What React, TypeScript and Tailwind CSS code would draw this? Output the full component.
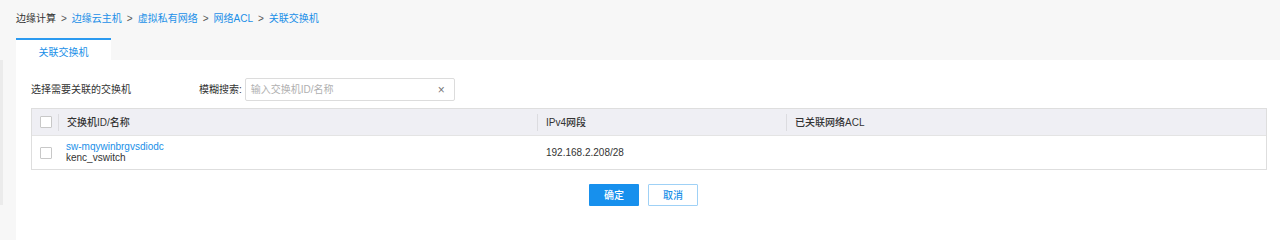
const crumbs = ["边缘云主机", "虚拟私有网络", "网络ACL", "关联交换机"];

const Checkbox = () => (
    <span className="block w-[12px] h-[12px] border border-[#c8c8c8] bg-white rounded-[1px]" />
);

const App = () => {
    return (
        <div
            className="w-[1280px] h-[240px] bg-[#f7f7f7] overflow-hidden flex text-[10px] text-[#333]"
            style={{ fontFamily: '"Liberation Sans", "Noto Sans CJK SC", sans-serif' }}
        >
            {/* left scroll strip */}
            <div className="w-[3px] shrink-0 pt-[60px]">
                <div className="h-[145px] bg-[#ebebeb]" />
            </div>

            <div className="flex-1 flex flex-col pl-[13px]">
                {/* breadcrumb */}
                <div className="h-[38px] flex items-center pb-[1px] gap-[4px] leading-none">
                    <span>边缘计算</span>
                    {crumbs.map((c) => (
                        <span key={c} className="flex items-center gap-[4px]">
                            <span className="text-[#555] px-[1px]">&gt;</span>
                            <span className="text-[#1a8fe8]">{c}</span>
                        </span>
                    ))}
                </div>

                {/* tabs */}
                <div className="flex h-[22px]">
                    <div className="w-[95px] border-t-[2px] border-[#2b9af0] bg-white text-[#1a8fe8] flex items-center justify-center pt-[4px]">
                        关联交换机
                    </div>
                </div>

                {/* panel */}
                <div className="flex-1 bg-white border-r border-[#e6e6e6] px-[15px]">
                    <div className="flex items-center h-[35px] mt-[12px]">
                        <span className="w-[168px]">选择需要关联的交换机</span>
                        <span className="mr-[3px]">模糊搜索:</span>
                        <div className="w-[210px] h-[23px] border border-[#dcdcdc] rounded-[2px] flex items-center justify-between px-[5px]">
                            <span className="text-[#b0b0b0]">输入交换机ID/名称</span>
                            <span className="text-[#777] text-[12px] font-light pr-[4px]">×</span>
                        </div>
                    </div>

                    {/* table */}
                    <div className="mt-[1px] w-[1236px] border border-[#dedede]">
                        <div className="grid grid-cols-[26px_479px_249px_1fr] h-[26px] bg-[#efeff4] items-center">
                            <div className="flex justify-center pl-[1px]">
                                <Checkbox />
                            </div>
                            <div className="flex items-center h-full">
                                <span className="w-px h-[17px] bg-[#dcdce0] mr-[8px]" />
                                <span className="font-medium">交换机ID/名称</span>
                            </div>
                            <div className="flex items-center h-full">
                                <span className="w-px h-[17px] bg-[#dcdce0] mr-[8px]" />
                                <span className="font-medium">IPv4网段</span>
                            </div>
                            <div className="flex items-center h-full">
                                <span className="w-px h-[17px] bg-[#dcdce0] mr-[8px]" />
                                <span className="font-medium">已关联网络ACL</span>
                            </div>
                        </div>
                        <div className="grid grid-cols-[26px_479px_249px_1fr] h-[34px] items-center border-t border-[#e4e4e4]">
                            <div className="flex justify-center pl-[1px]">
                                <Checkbox />
                            </div>
                            <div className="pl-[8px] leading-[11px] pb-[1px]">
                                <div className="text-[#1a8fe8]">sw-mqywinbrgvsdiodc</div>
                                <div>kenc_vswitch</div>
                            </div>
                            <div className="pl-[9px]">192.168.2.208/28</div>
                            <div />
                        </div>
                    </div>

                    {/* actions */}
                    <div className="flex justify-center gap-[9px] mt-[14px] pr-[11px]">
                        <button className="w-[50px] h-[22px] bg-[#1790ed] text-white font-medium rounded-[1px]">
                            确定
                        </button>
                        <button className="w-[50px] h-[22px] border border-[#9fd1f6] text-[#1a8fe8] font-medium rounded-[1px] bg-white">
                            取消
                        </button>
                    </div>
                </div>
            </div>
        </div>
    );
};

export default App;
